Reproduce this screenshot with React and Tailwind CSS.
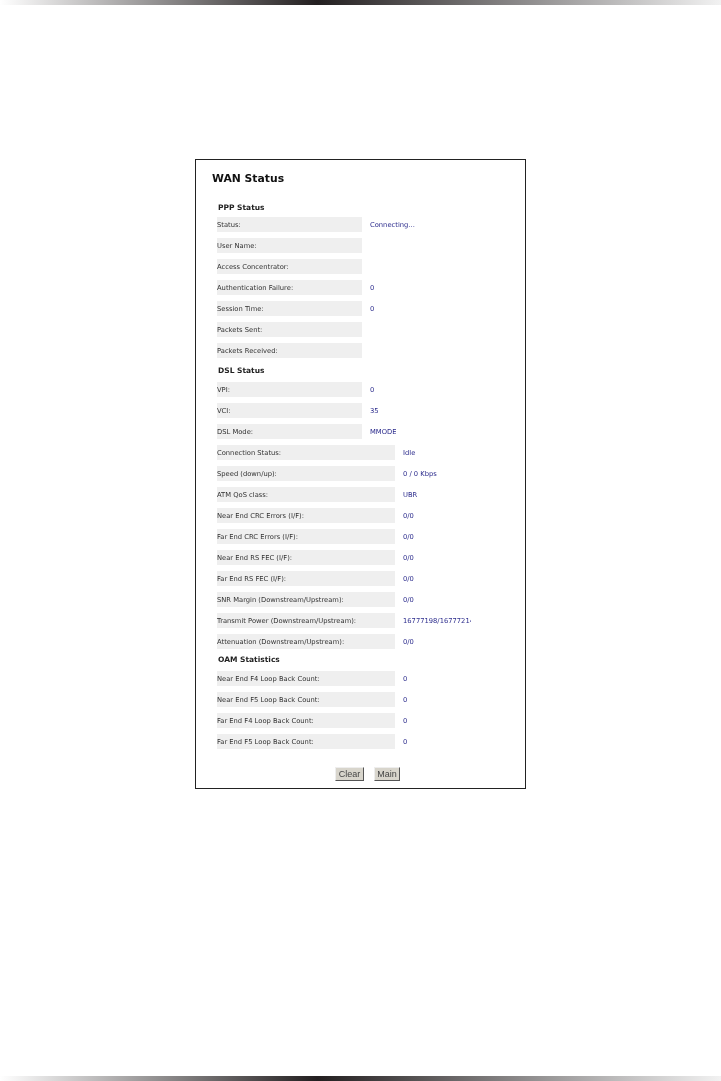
const ppp = [
  ["Status:", "Connecting..."],
  ["User Name:", ""],
  ["Access Concentrator:", ""],
  ["Authentication Failure:", "0"],
  ["Session Time:", "0"],
  ["Packets Sent:", ""],
  ["Packets Received:", ""],
];

const dslShort = [
  ["VPI:", "0"],
  ["VCI:", "35"],
  ["DSL Mode:", "MMODE"],
];

const dslLong = [
  ["Connection Status:", "Idle"],
  ["Speed (down/up):", "0 / 0 Kbps"],
  ["ATM QoS class:", "UBR"],
  ["Near End CRC Errors (I/F):", "0/0"],
  ["Far End CRC Errors (I/F):", "0/0"],
  ["Near End RS FEC (I/F):", "0/0"],
  ["Far End RS FEC (I/F):", "0/0"],
  ["SNR Margin (Downstream/Upstream):", "0/0"],
  ["Transmit Power (Downstream/Upstream):", "16777198/16777214"],
  ["Attenuation (Downstream/Upstream):", "0/0"],
];

const oam = [
  ["Near End F4 Loop Back Count:", "0"],
  ["Near End F5 Loop Back Count:", "0"],
  ["Far End F4 Loop Back Count:", "0"],
  ["Far End F5 Loop Back Count:", "0"],
];

const Row = ({ label, value, wide }) => (
  <div className="flex items-center h-[15px] mb-[6px]">
    <div
      className={`h-full shrink-0 flex items-center pt-[2px] bg-[#efefef] text-[6.75px] text-[#333] ${
        wide ? "w-[178px]" : "w-[145px]"
      }`}
    >
      <span className="blur-[0.35px]">{label}</span>
    </div>
    <div
      className={`ml-[8px] pt-[2px] text-[6.75px] text-[#2b2b8c] overflow-hidden whitespace-nowrap blur-[0.35px] ${
        wide ? "w-[68px]" : ""
      }`}
    >
      {value}
    </div>
  </div>
);

const Heading = ({ children, className }) => (
  <h2
    className={`pl-[1px] text-[7.5px] leading-[10px] font-bold text-[#222] blur-[0.3px] ${className}`}
  >
    {children}
  </h2>
);

const Bar = () => (
  <div className="h-[5px] bg-[linear-gradient(90deg,#ffffff_0%,#231f20_44%,#f2f2f2_100%)]" />
);

const buttonClass =
  "h-[14px] bg-[#d8d5cc] border-t border-l border-t-[#eeeeee] border-l-[#eeeeee] border-r border-b border-r-[#555] border-b-[#555] text-[9px] leading-none text-[#444] font-['Liberation_Sans',sans-serif]";

export default function App() {
  return (
    <div className="flex flex-col h-[1081px] bg-white font-['DejaVu_Sans',sans-serif]">
      <Bar />
      <div className="pl-[195px] pt-[154px]">
        <div className="w-[331px] h-[630px] border border-[#222] pl-[16px] pt-[12px]">
          <h1 className="text-[10.8px] leading-[14px] font-bold text-[#111] blur-[0.3px]">
            WAN Status
          </h1>
          <div className="pl-[5px]">
            <Heading className="mt-[17px] mb-[4px]">PPP Status</Heading>
            {ppp.map(([label, value]) => (
              <Row key={label} label={label} value={value} />
            ))}
            <Heading className="mt-[8px] mb-[6px]">DSL Status</Heading>
            {dslShort.map(([label, value]) => (
              <Row key={label} label={label} value={value} />
            ))}
            {dslLong.map(([label, value]) => (
              <Row key={label} label={label} value={value} wide />
            ))}
            <Heading className="mt-[6px] mb-[6px]">OAM Statistics</Heading>
            {oam.map(([label, value]) => (
              <Row key={label} label={label} value={value} wide />
            ))}
            <div className="flex justify-center gap-[10px] mt-[18px] w-[311px] ml-[-5px]">
              <button className={`w-[29px] ${buttonClass}`}>
                <span className="blur-[0.3px]">Clear</span>
              </button>
              <button className={`w-[26px] ${buttonClass}`}>
                <span className="blur-[0.3px]">Main</span>
              </button>
            </div>
          </div>
        </div>
      </div>
      <div className="mt-auto">
        <Bar />
      </div>
    </div>
  );
}
